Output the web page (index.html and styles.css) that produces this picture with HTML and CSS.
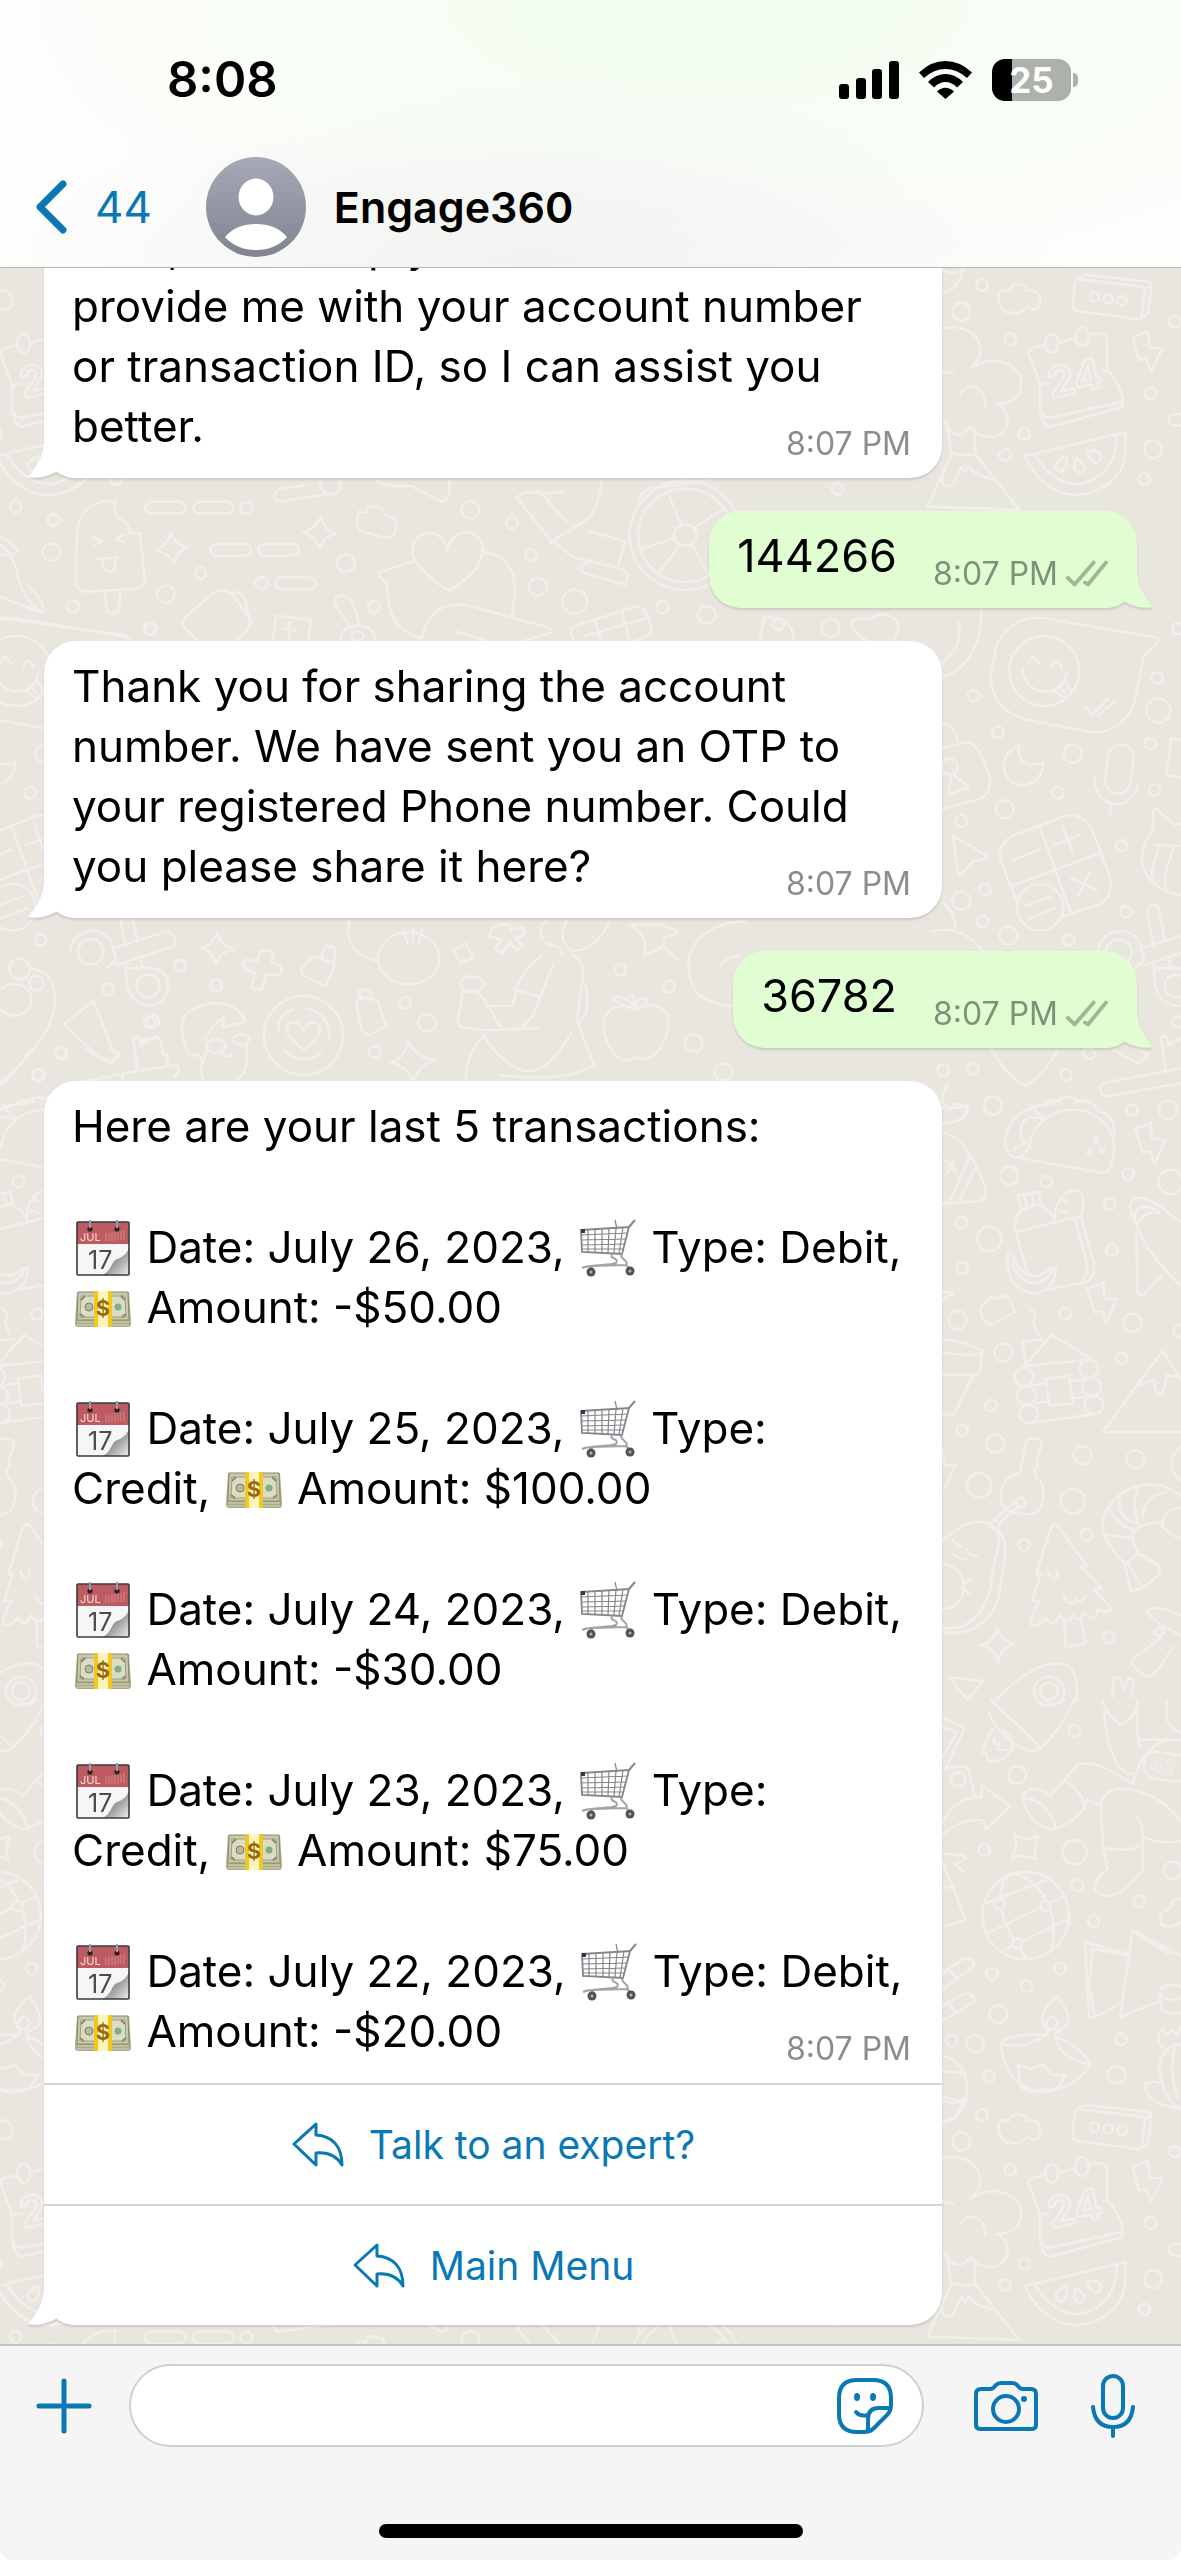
FILE: index.html
```
<!DOCTYPE html>
<html lang="en">
<head>
    <meta charset="UTF-8">
    <meta name="viewport" content="width=device-width, initial-scale=1.0">
    <title>Engage360</title>
    <link rel="stylesheet" href="styles.css">
</head>
<body>
    <!-- SHARED SHAPES -->
    <svg class="sprite" aria-hidden="true">
        <defs>
            <linearGradient id="avatarFill" x1="0" y1="0" x2="0" y2="1">
                <stop offset="0" stop-color="#a6aab8"/>
                <stop offset="1" stop-color="#80848f"/>
            </linearGradient>
            <linearGradient id="pageCurl" x1="0" y1="0" x2="1" y2="1">
                <stop offset="0" stop-color="#fff"/>
                <stop offset="0.5" stop-color="#999"/>
                <stop offset="1" stop-color="#eee"/>
            </linearGradient>
        </defs>
        <symbol id="tail" viewBox="0 0 48 40">
            <path d="M16 0C16 16 10 28 0 39C10 41 22 38 29 33C34 38 42 40 48 40V0Z"/>
        </symbol>
        <symbol id="ticks" viewBox="0 0 44 28">
            <path d="M2 18L9 25L29 2M20 23L23 25L42 2"/>
        </symbol>
        <symbol id="reply" viewBox="0 0 54 46">
            <path d="M25 2L3 22L25 43V31C36 30 45 33 51 43C51 25 42 14 25 13Z"/>
        </symbol>
        <symbol id="calendar" viewBox="0 0 56 58">
            <rect x="2" y="3" width="52" height="53" rx="1" fill="#f6f6f6"/>
            <path d="M2 3H54V25H2Z" fill="#bd5b60"/>
            <text x="5" y="22" font-family="Inter, sans-serif" font-size="11" fill="#f3d9da">JUL</text>
            <path d="M31 14V22M34 14V22M37 13V22M40 13V22M43 12V21M46 12V21M49 11V21" stroke="#d08a8d"/>
            <text x="13" y="50" font-family="Inter, sans-serif" font-size="25" fill="#4a4a4a">17</text>
            <path d="M28 56C38 50 36 42 42 40C48 38 52 34 54 29V56Z" fill="url(#pageCurl)"/>
            <rect x="2" y="3" width="52" height="53" rx="1" fill="none" stroke="#3c3a40" stroke-width="1.6"/>
            <circle cx="15" cy="10" r="2.6" fill="#2d2226"/>
            <circle cx="42" cy="10" r="2.6" fill="#2d2226"/>
            <path d="M15 9V1M42 9V1" stroke="#8ea2b4" stroke-width="2"/>
        </symbol>
        <symbol id="cart" viewBox="0 0 56 58">
            <g fill="none" stroke="#85858b" stroke-width="1.2">
                <path d="M1 11L49 8L42 35L2 33Z" stroke-width="1.8"/>
                <path d="M1 16L48 14M1 21L46 20M2 26L45 25M2 30L43 30M8 11V33M15 10V34M22 10V34M29 9L28 34M36 9L34 34M43 8L39 35"/>
                <path d="M49 8L55 1" stroke-width="2"/>
                <path d="M35 1L37 10"/>
                <path d="M32 35C29 40 40 39 36 44C30 47 12 45 2 49M42 35C38 39 50 42 46 46L12 47M2 49C8 46 12 47 12 50M46 46L50 50" stroke="#a2a2a8" stroke-width="2"/>
            </g>
            <rect x="1" y="10" width="4" height="4" fill="#2b3a4d"/>
            <circle cx="11" cy="53" r="4.5" fill="#574f51"/>
            <circle cx="50" cy="52" r="4.5" fill="#574f51"/>
            <circle cx="11" cy="53" r="1.5" fill="#b9b2b4"/>
            <circle cx="50" cy="52" r="1.5" fill="#b9b2b4"/>
        </symbol>
        <symbol id="money" viewBox="0 0 56 58">
            <path d="M2 13H54L56 44Q56 48 53 48H3Q0 48 0 44Z" fill="#a9a887"/>
            <path d="M2 43H54M2 46H54" stroke="#d9d8bd"/>
            <path d="M3 13H53L54 41H2Z" fill="#c9c9ab" stroke="#8b8b6c"/>
            <path d="M6 17H50L51 38H5Z" fill="#dcdcc4" stroke="#a0a083"/>
            <circle cx="14" cy="28" r="4" fill="#b9b99c" stroke="#7e7e62"/>
            <circle cx="43" cy="28" r="3.5" fill="#7fae84"/>
            <path d="M6 21L10 17M50 21L46 17M5 35L9 38M51 35L47 38" stroke="#8b8b6c" stroke-width="2"/>
            <path d="M19 12H37V48H19Z" fill="#f2c81e"/>
            <path d="M23 12H33V48H23Z" fill="#fdf3bd"/>
            <text x="28" y="37" text-anchor="middle" font-family="Inter, sans-serif" font-weight="700" font-size="22" fill="#9a6a10">$</text>
        </symbol>
    </svg>

    <!-- HEADER -->
    <header class="header">
        <div class="status-bar">
            <span class="clock">8:08</span>
            <div class="status-icons">
                <svg class="signal" viewBox="0 0 60 38" aria-hidden="true">
                    <rect x="0" y="23" width="10" height="15" rx="3"/>
                    <rect x="17" y="17" width="10" height="21" rx="3"/>
                    <rect x="33" y="8" width="10" height="30" rx="3"/>
                    <rect x="50" y="0" width="10" height="38" rx="3"/>
                </svg>
                <svg class="wifi" viewBox="0 0 53 38" aria-hidden="true">
                    <path d="M0 11.500Q12 0 26.500 0T53 11.500L48 17Q38 8 26.500 8T5 17Z"/>
                    <path d="M9 21Q17 13 26.500 13T44 21L38 26.500Q33 21 26.500 21T15 26.500Z"/>
                    <path d="M18 30.500Q26.500 23 35 30.500L26.500 38Z"/>
                </svg>
                <div class="battery">25</div>
            </div>
        </div>
        <div class="nav">
            <a class="back" href="#" aria-label="Back, 44 unread">
                <svg class="chevron" viewBox="0 0 32 54" aria-hidden="true"><path d="M27 4L4 27L27 50"/></svg>
                <span>44</span>
            </a>
            <svg class="avatar" viewBox="0 0 100 100" aria-hidden="true">
                <circle cx="50" cy="50" r="50" fill="url(#avatarFill)"/>
                <ellipse cx="50" cy="40" rx="17.500" ry="18.500" fill="#fff"/>
                <path d="M19 80Q30 67 50 67T81 80Q69 93 50 93T19 80Z" fill="#fff"/>
            </svg>
            <h1 class="name">Engage360</h1>
        </div>
    </header>

    <!-- CHAT -->
    <main class="chat">
        <svg class="wallpaper" aria-hidden="true">
            <defs>
                <g id="doodles">
                    <!-- cloud, box, calendar, bolt, melon, volcano -->
                    <g transform="translate(581 0) scale(.3827 .3333)">
                        <path d="M1100 925C1080 890 1095 860 1118 873C1125 845 1160 845 1165 872C1190 865 1205 890 1198 915C1190 935 1175 930 1165 920C1155 940 1130 945 1120 935C1110 940 1102 935 1100 925Z"/>
                        <path d="M1290 850Q1292 838 1305 838L1465 860Q1475 862 1473 875L1465 945Q1463 962 1450 957L1295 932Q1283 928 1285 915ZM1298 840L1320 825L1480 845Q1492 848 1490 862L1482 935Q1475 955 1455 957M1473 868L1490 855"/>
                        <path d="M1212 1036L1180 1045Q1168 1050 1170 1062L1200 1155L1200 1230Q1203 1275 1225 1280L1405 1225Q1418 1220 1416 1200Q1410 1150 1375 1110L1375 1020Q1372 1000 1355 1000L1328 1003M1248 1028L1290 1015M1200 1155L1225 1150M1365 1115L1375 1110M1205 1240Q1215 1258 1228 1253L1414 1205"/>
                        <path d="M1442 1012L1480 995L1487 1045L1520 1045L1490 1115L1475 1075L1458 1082Z"/>
                        <path d="M1160 1368L1422 1297Q1430 1400 1390 1440Q1330 1500 1260 1480Q1190 1450 1160 1368ZM1185 1362Q1230 1450 1300 1453Q1400 1430 1400 1303"/>
                        <path d="M945 985C1010 970 1050 1010 1042 1070Q1030 1090 1020 1105C1070 1060 1150 1090 1150 1150C1150 1200 1120 1210 1085 1212C1130 1230 1125 1310 1070 1310C1030 1310 1025 1290 1018 1280C1000 1310 970 1320 950 1265M990 1185C1010 1140 1060 1160 1056 1220M945 1115L973 1120"/>
                        <path d="M955 1270L968 1360Q1000 1370 1030 1362V1290M968 1362L905 1520L1145 1530L1030 1362M960 1385C930 1440 945 1470 970 1455C985 1430 990 1400 996 1400Q1000 1420 1005 1415Q1018 1390 1020 1410Q1040 1430 1075 1438M945 810Q985 830 1000 805M945 880Q985 870 1000 808"/>
                        <ellipse cx="1230" cy="1030" rx="17" ry="28"/><ellipse cx="1309" cy="1010" rx="17" ry="28"/>
                        <ellipse cx="1342" cy="891" rx="12" ry="14"/><ellipse cx="1378" cy="896" rx="12" ry="14"/><ellipse cx="1414" cy="902" rx="12" ry="14"/>
                        <path d="M1268 1368Q1275 1400 1255 1415Q1238 1410 1240 1395Q1250 1375 1268 1368ZM1295 1375Q1320 1395 1315 1412Q1302 1425 1290 1410Q1285 1395 1295 1375ZM1322 1355Q1350 1345 1360 1368Q1358 1385 1345 1388Q1325 1378 1322 1355Z"/>
                        <ellipse cx="1048" cy="855" rx="15" ry="17"/><ellipse cx="994" cy="935" rx="23" ry="27"/><ellipse cx="1122" cy="1018" rx="15" ry="17"/>
                        <ellipse cx="1488" cy="1180" rx="15" ry="17"/><ellipse cx="1158" cy="1302" rx="15" ry="17"/><ellipse cx="1108" cy="1365" rx="15" ry="17"/>
                        <ellipse cx="1495" cy="1348" rx="23" ry="27"/><ellipse cx="1472" cy="1438" rx="15" ry="17"/><ellipse cx="1552" cy="965" rx="15" ry="17"/>
                        <rect x="1536" y="1243" width="60" height="34" rx="15"/><ellipse cx="670" cy="1467" rx="15" ry="17"/>
                        <path d="M150 1500Q160 1460 220 1460L340 1440"/>
                    </g>
                    <text class="doodle-text" x="1075" y="393" font-size="42" transform="rotate(-12 1075 380)">24</text>

                    <!-- popsicle, pills, heart, wheel and the row below it -->
                    <g transform="translate(0 470) scale(.4719 .3954)">
                        <path d="M245 78C190 75 165 110 163 160L160 285Q165 308 185 308L285 300Q308 295 307 275L296 160L275 158Q270 130 262 128Q235 120 245 78ZM223 310L226 355Q240 375 252 355L255 305M198 170L215 180L200 190M262 165L246 175L264 184M208 225L250 222M215 225L220 250Q232 265 244 250L245 223"/>
                        <rect x="308" y="80" width="85" height="30" rx="15"/><rect x="410" y="80" width="85" height="30" rx="15"/>
                        <rect x="446" y="187" width="86" height="30" rx="15"/><rect x="547" y="187" width="86" height="30" rx="15"/><rect x="583" y="272" width="86" height="30" rx="15"/>
                        <path d="M362 157Q370 190 398 195Q375 200 370 238Q358 210 330 203Q355 190 362 157ZM680 118Q685 150 712 162Q685 168 677 200Q668 165 642 158Q670 150 680 118Z"/>
                        <path d="M760 105L775 108L782 92L812 98L815 112L840 125Q842 170 818 172L765 155Q752 145 760 105Z"/>
                        <path d="M952 305C900 270 860 220 878 180C900 145 940 155 948 205C955 155 1000 140 1020 180C1035 240 980 285 952 305ZM877 230L805 258Q795 262 820 285C820 350 830 400 890 425M1026 207C1100 220 1095 300 1085 370"/>
                        <path d="M893 430C910 330 970 335 1000 345L1160 398Q1175 405 1165 412L1110 432M965 408L1030 432"/>
                        <path d="M395 370L450 312Q475 295 495 318L525 370Q535 390 520 410L500 434M395 370Q380 385 395 405L420 434M490 310Q520 305 522 345L533 390"/>
                        <path d="M578 434L585 368L660 380L652 434M612 385V425M600 400L628 408M745 400L710 340Q708 315 725 318Q745 320 752 350L762 395"/>
                        <ellipse cx="758" cy="424" rx="36" ry="30"/><ellipse cx="758" cy="420" rx="12" ry="12"/>
                        <path d="M1210 412Q1205 400 1225 392L1345 346Q1362 345 1368 360L1382 400Q1382 420 1340 434M1210 412L1216 434M1260 380L1275 434M1318 357L1335 434M1240 420L1370 375"/>
                        <ellipse cx="1452" cy="165" rx="118" ry="138"/><ellipse cx="1452" cy="165" rx="100" ry="118"/><ellipse cx="1452" cy="165" rx="24" ry="27"/>
                        <path d="M1444 140L1418 65M1470 148L1530 100M1430 172L1360 200M1440 190L1400 255M1465 188L1500 260"/>
                        <path d="M1095 70Q1110 50 1150 60L1195 55M1095 70L1165 175L1215 220L1300 245Q1340 250 1325 290L1235 260Q1225 240 1245 232M1140 50L1200 130M1165 185L1250 120Q1268 90 1275 28M1250 155L1325 180L1310 240M645 38L595 48Q570 65 590 80L700 60M720 28Q725 60 700 62Q675 55 680 28M800 28Q820 45 870 40L935 80Q955 80 952 28"/>
                        <path d="M0 170Q30 185 38 205M0 215L30 212M35 250Q45 330 90 360Q95 340 80 320L58 292M35 250Q20 200 0 190M0 320Q50 345 88 360M0 375L265 418L275 434"/>
                        <path d="M855 1168L865 1198M875 1160V1195M895 1160L887 1195M740 1140C730 1190 750 1230 800 1242M962 1215L988 1197L1002 1235L975 1245Z"/>
                        <ellipse cx="866" cy="1235" rx="65" ry="66"/>
                        <path d="M460 1170Q468 1205 496 1212Q465 1220 458 1250Q450 1215 428 1210Q450 1200 460 1170ZM865 1445Q880 1485 922 1492Q885 1505 875 1548Q865 1510 828 1498Q860 1485 865 1445Z"/>
                        <path d="M1060 1150L1080 1150L1083 1165L1108 1155L1112 1175L1092 1185L1110 1205L1095 1215L1080 1195L1065 1222L1050 1210L1062 1188L1038 1180L1042 1160Z"/>
                        <path d="M550 1220Q565 1210 580 1222L575 1245L595 1255Q600 1270 588 1278L565 1275L555 1312Q540 1320 533 1308L540 1272L518 1260Q512 1245 522 1238L545 1243Z"/>
                        <path d="M665 1228L710 1250L690 1305L645 1280Q635 1270 640 1260ZM680 1235L690 1205Q705 1200 712 1215L705 1248M755 1350Q750 1340 775 1335L800 1342L818 1405L785 1428Q770 1430 765 1410ZM765 1338L760 1318Q768 1308 785 1320L792 1340"/>
                        <path d="M135 1402L198 1342L240 1470L252 1475L235 1500L222 1488L210 1485ZM283 1440Q300 1430 300 1445Q330 1430 340 1440L345 1475L355 1480V1510M283 1440L290 1520M260 1545L262 1525L375 1505Q385 1515 370 1535"/>
                        <path d="M430 1545Q420 1500 440 1470M400 1480Q370 1400 400 1370C450 1330 510 1350 520 1395L470 1410L475 1385Q450 1400 435 1440M408 1480Q425 1475 430 1500M470 1475Q480 1488 492 1478M522 1455Q530 1520 500 1545"/>
                        <ellipse cx="458" cy="1457" rx="20" ry="17"/><ellipse cx="511" cy="1440" rx="17" ry="13"/>
                        <ellipse cx="643" cy="1430" rx="84" ry="100"/>
                        <path d="M643 1465C610 1440 600 1410 615 1398Q635 1390 643 1420Q650 1390 672 1400C690 1420 665 1450 643 1465ZM590 1420C585 1380 610 1370 620 1365M650 1362Q700 1375 698 1440M602 1468Q640 1510 680 1475"/>
                        <ellipse cx="30" cy="1340" rx="37" ry="40"/><ellipse cx="42" cy="1262" rx="22" ry="26"/><ellipse cx="77" cy="1298" rx="15" ry="19"/>
                        <path d="M70 1262C130 1270 130 1380 80 1450C50 1500 20 1530 0 1548"/>
                        <path d="M1148 1185Q1140 1150 1160 1140M1155 1195L1185 1208L1190 1225M1200 1140Q1180 1190 1210 1215Q1260 1220 1290 1145M1210 1225Q1240 1240 1235 1290L1222 1390M1148 1228Q1110 1260 1092 1315L1145 1332M1172 1250L1145 1332Q1130 1400 1090 1418M1030 1355H1085L1095 1320M980 1320Q1000 1310 1020 1330L1065 1415Q1030 1420 975 1408Q965 1390 975 1365ZM1240 1300Q1250 1350 1240 1380L1225 1400M1025 1430Q1060 1500 1110 1520Q1160 1530 1210 1425M1065 1415L1140 1412M1222 1390L1258 1505Q1200 1550 1060 1530M1025 1430Q985 1480 988 1545"/>
                        <ellipse cx="1000" cy="1300" rx="24" ry="20"/>
                        <path d="M1335 1150H1400L1435 1165Q1430 1180 1410 1180L1405 1205Q1400 1215 1365 1225Q1375 1180 1335 1150ZM1405 1205L1438 1240"/>
                        <path d="M1348 1365C1300 1340 1270 1370 1282 1430C1300 1500 1330 1500 1345 1485C1370 1500 1400 1480 1415 1420C1425 1360 1390 1340 1348 1365ZM1348 1365L1340 1325M1345 1360Q1300 1350 1298 1332Q1330 1330 1345 1360M1345 1360Q1350 1330 1373 1338Q1370 1355 1345 1360M1580 1140C1470 1150 1440 1230 1470 1310Q1490 1350 1550 1355M1525 1260Q1535 1230 1568 1230"/>
                        <ellipse cx="33" cy="93" rx="12" ry="15"/><ellipse cx="113" cy="126" rx="12" ry="15"/><ellipse cx="154" cy="345" rx="12" ry="15"/><ellipse cx="320" cy="402" rx="12" ry="15"/>
                        <ellipse cx="425" cy="261" rx="12" ry="15"/><ellipse cx="522" cy="96" rx="13" ry="15"/><ellipse cx="554" cy="286" rx="13" ry="15"/><ellipse cx="792" cy="346" rx="12" ry="15"/>
                        <ellipse cx="1085" cy="134" rx="12" ry="15"/><ellipse cx="1125" cy="215" rx="12" ry="15"/><ellipse cx="1404" cy="348" rx="12" ry="15"/><ellipse cx="382" cy="1254" rx="12" ry="15"/>
                        <ellipse cx="229" cy="1314" rx="12" ry="15"/><ellipse cx="458" cy="1303" rx="12" ry="15"/><ellipse cx="325" cy="1394" rx="12" ry="15"/><ellipse cx="130" cy="1474" rx="12" ry="15"/>
                        <ellipse cx="82" cy="1530" rx="12" ry="15"/><ellipse cx="858" cy="1348" rx="12" ry="15"/><ellipse cx="794" cy="1472" rx="12" ry="15"/><ellipse cx="1315" cy="1264" rx="12" ry="15"/><ellipse cx="1418" cy="1307" rx="12" ry="15"/>
                        <ellipse cx="109" cy="208" rx="19" ry="22"/><ellipse cx="351" cy="314" rx="19" ry="22"/><ellipse cx="733" cy="236" rx="19" ry="22"/><ellipse cx="997" cy="101" rx="19" ry="22"/>
                        <ellipse cx="1140" cy="295" rx="19" ry="22"/><ellipse cx="1497" cy="366" rx="19" ry="22"/><ellipse cx="905" cy="1398" rx="19" ry="22"/><ellipse cx="1470" cy="1450" rx="19" ry="22"/><ellipse cx="1532" cy="1522" rx="19" ry="22"/>
                        <ellipse cx="1218" cy="333" rx="26" ry="30"/><ellipse cx="1760" cy="400" rx="19" ry="22"/><ellipse cx="1650" cy="390" rx="12" ry="15"/>
                        <path d="M1840 434C1790 400 1800 360 1840 380Q1870 350 1900 380Q1910 400 1890 434M1610 434L1620 370Q1690 380 1680 434"/>
                    </g>

                    <!-- speech bubble, lock, moon, mic, calculator, scissors -->
                    <g transform="translate(931 590) scale(.3333)">
                        <path d="M190 200C200 120 270 75 340 85L665 140Q690 145 675 162L638 200L612 330C590 400 540 430 480 426L290 390C210 370 175 310 180 250ZM293 218Q305 185 325 222M362 230Q378 195 393 234M275 232C275 320 390 330 406 252M370 302L395 322Q415 325 422 300L400 272M385 290L400 308M463 348L485 374L530 327M500 376L555 333"/>
                        <circle cx="340" cy="243" r="105"/>
                        <path d="M150 60C155 160 110 240 33 262M84 98C95 160 60 200 33 218M33 475L90 458Q130 450 150 495L175 555Q185 610 145 628L33 658M33 400Q65 400 80 452M66 552L113 592L53 613L60 552"/>
                        <circle cx="56" cy="530" r="24"/>
                        <path d="M265 465Q255 540 338 518C330 600 240 605 220 545Q210 490 265 465Z"/>
                        <rect x="527" y="463" width="76" height="148" rx="38" transform="rotate(8 565 537)"/>
                        <path d="M490 562C490 660 600 670 622 585M544 642L536 672"/>
                        <path d="M325 708L400 678Q460 665 490 735L532 850Q555 920 500 945L390 982M325 708L250 735Q195 765 208 810L260 940M325 708L420 970M240 888L508 790M245 810L325 780M370 765L447 735M396 710L424 785M420 865L497 900M478 845L440 920M282 948L360 920M295 985L373 955"/>
                        <circle cx="327" cy="952" r="70"/>
                        <path d="M68 738L170 800Q172 808 125 815L90 855Q84 860 82 850L66 745ZM664 725L668 660Q675 652 685 665L732 705L780 690M664 725C610 790 620 890 750 915M672 765L780 768M680 765C690 800 655 810 665 870M728 768C725 810 695 820 705 900M705 555L722 445L780 455M705 555L780 565"/>
                        <path d="M648 960Q665 930 682 955L703 1052M648 960L668 1070M500 1085C510 1020 590 1000 625 1055L640 1110L610 1135M630 1075L790 1025Q830 1035 810 1070L640 1125M670 1125C665 1200 680 1240 740 1248Q800 1240 795 1170Q780 1130 720 1135L712 1100M670 1135L720 1135"/>
                        <circle cx="563" cy="1086" r="38"/><circle cx="735" cy="1188" r="34"/>
                        <path d="M33 935Q70 960 75 1015M0 1025Q90 1000 155 1085M180 1375Q220 1450 285 1490Q350 1440 380 1380M515 1480Q500 1500 520 1520L760 1478M515 1480L750 1435M705 1440L690 1345Q705 1325 715 1365L760 1340M550 1380L620 1420L650 1395L620 1375M50 1485Q15 1540 60 1555L110 1550M290 1560Q340 1540 370 1540Q400 1510 440 1530Q490 1530 495 1560"/>
                        <circle cx="127" cy="317" r="17"/><circle cx="201" cy="427" r="17"/><circle cx="678" cy="264" r="17"/><circle cx="658" cy="461" r="17"/><circle cx="671" cy="600" r="17"/>
                        <circle cx="381" cy="608" r="17"/><circle cx="91" cy="693" r="17"/><circle cx="571" cy="767" r="17"/><circle cx="161" cy="899" r="17"/><circle cx="155" cy="995" r="17"/>
                        <circle cx="584" cy="965" r="17"/><circle cx="413" cy="1050" r="17"/><circle cx="37" cy="1440" r="17"/><circle cx="126" cy="1436" r="17"/><circle cx="405" cy="1455" r="17"/>
                        <circle cx="474" cy="1390" r="17"/><circle cx="740" cy="116" r="17"/><circle cx="740" cy="1296" r="17"/><circle cx="425" cy="491" r="27"/><circle cx="221" cy="658" r="27"/>
                        <circle cx="91" cy="932" r="27"/><circle cx="232" cy="1037" r="27"/><circle cx="186" cy="1546" r="27"/><circle cx="682" cy="362" r="36"/>
                    </g>

                    <!-- taco, lunch bag, cabin, key, tree, shrimp -->
                    <g transform="translate(931 1100) scale(.3333 .3827)">
                        <path d="M245 148Q225 140 222 110C230 40 290 20 340 10Q350 -5 390 5M245 148L510 190Q540 190 543 160C570 80 500 25 420 25C340 30 300 80 298 115Q285 145 260 150M250 130Q270 110 298 115M335 50Q270 30 268 90Q275 110 285 112M300 12Q320 40 340 45M430 8Q480 -10 500 28Q560 40 548 100M33 18Q60 40 70 10L112 15Q105 60 33 62"/>
                        <circle cx="495" cy="104" r="6"/><circle cx="476" cy="137" r="6"/><circle cx="513" cy="131" r="6"/>
                        <path d="M33 85C100 95 140 170 165 235Q170 260 140 265L33 270M115 148L58 262M133 178L85 265M40 155L75 185M70 155L50 190"/>
                        <path d="M612 75L660 60L662 100L703 105L670 168L658 135L637 138ZM468 492L518 478L520 520L557 520L525 584L512 552L490 555Z"/>
                        <path d="M255 345L450 303L490 430Q490 480 440 480L350 495M255 345L290 455M432 310L468 430Q470 460 455 470M255 345Q245 300 280 285L320 272Q360 285 372 315M260 250L322 240L330 270L270 283ZM280 247L288 279M302 243L310 275M372 310C370 240 440 220 455 250Q460 280 450 303M385 290L407 295M390 258L408 266"/>
                        <path d="M230 402H245Q260 460 320 460Q350 450 360 440L375 440Q370 500 310 505C240 500 225 450 230 402ZM243 425Q270 490 330 475Q360 460 362 445M150 540L180 515L195 520L225 510L240 525L250 555L180 588Q145 575 150 540ZM297 545Q320 560 308 575Q305 590 322 612"/>
                        <path d="M280 695L363 614L485 678ZM283 690L275 630L335 625M307 745L345 740M420 735L455 730M315 792L350 788M425 780L460 776M293 844L490 821M345 728L415 720L425 793L355 798Z"/>
                        <ellipse cx="279" cy="724" rx="28" ry="24"/><ellipse cx="287" cy="772" rx="28" ry="24"/><ellipse cx="293" cy="820" rx="28" ry="24"/><ellipse cx="474" cy="702" rx="28" ry="24"/><ellipse cx="482" cy="749" rx="28" ry="24"/><ellipse cx="488" cy="797" rx="28" ry="24"/>
                        <path d="M850 868L695 655L515 868ZM622 748L668 730Q675 770 685 770Q700 770 708 718L750 725M33 625Q100 630 155 655L145 710Q140 720 120 720L33 717M33 660Q120 672 152 660M125 722L70 820L33 823M33 500L68 505L33 522M33 910L40 955L73 953L40 1015"/>
                        <path d="M600 290Q590 260 625 255Q660 255 720 300L800 350M600 290Q640 400 750 485M617 330Q630 290 685 295Q650 270 620 285Q605 300 617 330M617 350L618 500Q630 515 640 508L692 458"/>
                        <path d="M265 978L287 890Q300 880 330 890Q335 900 325 920L318 940Q325 960 310 965L315 985M265 978C215 975 200 1040 215 1060C240 1085 310 1090 325 1070Q355 1010 315 985M262 1062L205 1105M255 1050L190 1095"/>
                        <ellipse cx="269" cy="1052" rx="15" ry="13"/><ellipse cx="190" cy="1110" rx="17" ry="10"/>
                        <path d="M33 1150L90 1115C150 1090 200 1100 205 1150C200 1200 180 1220 180 1270C160 1350 100 1390 33 1378M200 1120Q230 1150 220 1200L205 1290C180 1380 100 1400 33 1390M33 1210Q95 1220 98 1270Q95 1330 33 1330M65 1148Q75 1170 95 1165M68 1185Q80 1200 105 1198M108 1175Q115 1192 138 1190M98 1265L118 1252M95 1275L115 1290"/>
                        <path d="M360 1118Q372 1100 385 1118L468 1218L450 1220L510 1275L490 1280L542 1330Q535 1345 500 1330Q500 1355 480 1355Q460 1340 458 1340Q440 1370 425 1345Q410 1380 385 1345Q370 1385 345 1352Q330 1375 300 1372Q295 1360 325 1308L303 1310L330 1238L315 1240ZM400 1365L403 1430L465 1420L448 1355M352 1232Q362 1260 380 1245L378 1230M398 1295Q415 1330 435 1305Q450 1320 463 1295"/>
                        <path d="M750 1035Q700 1000 650 1005C560 1010 500 1080 518 1130Q540 1180 580 1210L600 1283L635 1275L685 1240V1215L622 1185Q605 1160 605 1135Q620 1105 690 1105M565 1035Q560 1100 620 1105M625 1010Q600 1050 620 1100M710 1025Q640 1030 635 1090M750 1065Q690 1070 695 1115Q720 1140 750 1145M535 1070Q560 1110 610 1125M520 1135L605 1145M580 1208Q600 1205 620 1185L685 1220M590 1210L635 1275"/>
                        <path d="M198 1380Q210 1415 250 1420Q210 1430 202 1468Q190 1430 148 1425Q190 1415 198 1380ZM648 1335Q680 1320 720 1335L780 1360M648 1335Q660 1360 750 1400M690 1405L605 1460Q595 1480 650 1508Q670 1510 725 1430M668 1390Q690 1370 700 1390Q680 1410 668 1390M55 1508L155 1518L110 1568ZM195 1568C250 1520 300 1480 370 1472C430 1470 440 1500 438 1568M545 1560Q540 1500 565 1510L578 1540Q590 1500 608 1515L600 1560"/>
                        <ellipse cx="354" cy="1545" rx="45" ry="38"/><ellipse cx="354" cy="1545" rx="27" ry="22"/>
                        <ellipse cx="603" cy="27" rx="17" ry="15"/><ellipse cx="592" cy="193" rx="17" ry="15"/><ellipse cx="346" cy="213" rx="17" ry="15"/><ellipse cx="536" cy="271" rx="17" ry="15"/><ellipse cx="92" cy="321" rx="17" ry="15"/>
                        <ellipse cx="94" cy="439" rx="17" ry="15"/><ellipse cx="542" cy="393" rx="17" ry="15"/><ellipse cx="402" cy="559" rx="17" ry="15"/><ellipse cx="573" cy="675" rx="17" ry="15"/><ellipse cx="180" cy="798" rx="17" ry="15"/>
                        <ellipse cx="94" cy="864" rx="17" ry="15"/><ellipse cx="466" cy="1137" rx="17" ry="15"/><ellipse cx="279" cy="1162" rx="17" ry="15"/><ellipse cx="533" cy="1405" rx="17" ry="15"/><ellipse cx="745" cy="604" rx="17" ry="15"/>
                        <ellipse cx="186" cy="15" rx="27" ry="24"/><ellipse cx="711" cy="25" rx="27" ry="24"/><ellipse cx="235" cy="198" rx="27" ry="24"/><ellipse cx="80" cy="575" rx="27" ry="24"/><ellipse cx="217" cy="660" rx="27" ry="24"/>
                        <ellipse cx="605" cy="582" rx="27" ry="24"/><ellipse cx="193" cy="898" rx="27" ry="24"/><ellipse cx="454" cy="928" rx="27" ry="24"/><ellipse cx="613" cy="939" rx="27" ry="24"/>
                        <ellipse cx="719" cy="214" rx="36" ry="32"/><ellipse cx="175" cy="363" rx="36" ry="32"/><ellipse cx="145" cy="1007" rx="36" ry="32"/><ellipse cx="425" cy="1048" rx="36" ry="32"/><ellipse cx="770" cy="950" rx="48" ry="48"/>
                    </g>

                    <!-- rocket, arrow, globe, runner, cards, lamp -->
                    <g transform="translate(931 1700) scale(.3333 .4145)">
                        <path d="M175 30Q180 60 250 105Q300 135 330 115C390 70 410 30 430 0M180 0L330 115M345 0Q370 20 400 0M185 70Q155 110 155 130Q170 125 170 148Q230 150 245 110Q235 70 200 72M190 90Q180 110 205 105Q190 125 225 120"/>
                        <path d="M33 300C60 250 100 235 150 235L152 205L238 256L165 312L155 290Q90 285 33 325M33 165L90 160Q110 160 115 175L130 230M33 40L100 68L45 165M33 65L78 78L33 140M248 322Q282 345 322 328Q305 355 316 385Q280 370 242 382Q265 350 248 322Z"/>
                        <ellipse cx="284" cy="520" rx="130" ry="105"/>
                        <path d="M165 490L345 435M170 562L395 475M210 607L408 530M245 418C195 430 195 520 258 588L285 622M245 418C330 430 390 520 360 605"/>
                        <g fill="#e9e5df"><ellipse cx="205" cy="492" rx="15" ry="12"/><ellipse cx="344" cy="497" rx="15" ry="12"/><ellipse cx="259" cy="587" rx="15" ry="12"/></g>
                        <path d="M275 235C290 200 340 215 358 232L440 155C500 145 560 180 600 202M275 235Q290 300 365 312Q450 290 470 240L505 255M275 235Q350 240 375 310M400 195Q450 215 460 255M520 30Q530 150 590 178L605 178M620 30Q615 70 625 112M605 200Q640 100 720 97M620 95L750 97M510 250Q520 210 590 215Q680 225 750 290M510 250L515 350L530 408Q490 430 492 460Q550 500 635 410L635 330Q635 290 615 278M515 355Q580 370 635 350M635 330Q690 350 750 340M515 0Q520 30 570 60Q620 40 620 0M710 0Q690 70 760 80"/>
                        <rect x="640" y="128" width="130" height="65" rx="30" transform="rotate(6 700 160)"/>
                        <path d="M33 370L100 375Q115 385 70 395L100 415M33 390L65 450L103 530L45 545M33 455L65 450M462 585L590 612M462 585L475 765Q480 775 570 730M485 600L475 690L492 765M485 600L590 616M605 555L568 765L690 725M605 555L790 635M620 565L710 610"/>
                        <ellipse cx="725" cy="705" rx="38" ry="18"/>
                        <path d="M687 705L692 745Q720 765 770 750M685 800L700 795L705 810L725 795L735 808L750 790M685 800Q675 830 700 840M760 830Q690 830 685 890Q700 970 750 985M735 835Q710 880 740 960M640 930Q660 915 690 925M640 930Q650 980 750 985M750 480Q720 480 715 505Q680 510 690 540Q720 555 750 535"/>
                        <path d="M33 660L95 625Q125 620 130 640L33 700M60 655L80 675M33 740L100 708Q130 708 130 728L33 775M60 738L75 755M33 858Q105 870 108 940Q105 1010 33 1018M33 895L95 900M33 955L95 970"/>
                        <path d="M210 830Q220 805 340 808Q360 800 345 790Q310 760 380 715Q430 770 400 790Q370 800 372 812Q440 830 478 878Q430 950 300 940Q215 910 210 830ZM215 832Q300 840 350 805M372 812Q390 870 478 878M260 880L300 890L335 880L365 905L405 905L375 940Q320 955 270 935Z"/>
                        <ellipse cx="362" cy="780" rx="17" ry="15"/>
                        <ellipse cx="430" cy="75" rx="17" ry="14"/><ellipse cx="160" cy="362" rx="17" ry="14"/><ellipse cx="439" cy="447" rx="17" ry="14"/><ellipse cx="487" cy="534" rx="17" ry="14"/><ellipse cx="625" cy="486" rx="17" ry="14"/>
                        <ellipse cx="386" cy="648" rx="17" ry="14"/><ellipse cx="183" cy="660" rx="17" ry="14"/><ellipse cx="287" cy="690" rx="17" ry="14"/><ellipse cx="62" cy="821" rx="17" ry="14"/><ellipse cx="570" cy="819" rx="17" ry="14"/><ellipse cx="174" cy="908" rx="17" ry="14"/>
                        <ellipse cx="259" cy="181" rx="27" ry="21"/><ellipse cx="81" cy="191" rx="22" ry="17"/><ellipse cx="202" cy="758" rx="27" ry="21"/><ellipse cx="725" cy="411" rx="27" ry="21"/><ellipse cx="557" cy="904" rx="27" ry="21"/><ellipse cx="132" cy="829" rx="27" ry="21"/>
                        <ellipse cx="431" cy="367" rx="36" ry="29"/>
                    </g>
                    <text class="doodle-text thin" x="1163" y="1773" font-size="20" transform="rotate(12 1163 1766)">42</text>
                </g>
            </defs>
            <g transform="translate(0 -268)">
                <use href="#doodles"/>
                <use href="#doodles" x="-1028"/>
                <use href="#doodles" y="1830"/>
                <use href="#doodles" x="-1028" y="1830"/>
            </g>
        </svg>

        <div class="bubble in">
            <svg class="tail" aria-hidden="true"><use href="#tail"/></svg>
            <p class="text">Sure, I can help you with it. Please<br>provide me with your account number<br>or transaction ID, so I can assist you<br>better.<span class="meta"><time>8:07 PM</time></span></p>
        </div>

        <div class="bubble out">
            <svg class="tail" aria-hidden="true"><use href="#tail"/></svg>
            <p class="text">144266<span class="meta"><time>8:07 PM</time><svg class="ticks" aria-hidden="true"><use href="#ticks"/></svg></span></p>
        </div>

        <div class="bubble in">
            <svg class="tail" aria-hidden="true"><use href="#tail"/></svg>
            <p class="text">Thank you for sharing the account number. We have sent you an OTP to your registered Phone number. Could you please share it here?<span class="meta"><time>8:07 PM</time></span></p>
        </div>

        <div class="bubble out">
            <svg class="tail" aria-hidden="true"><use href="#tail"/></svg>
            <p class="text">36782<span class="meta"><time>8:07 PM</time><svg class="ticks" aria-hidden="true"><use href="#ticks"/></svg></span></p>
        </div>

        <div class="bubble in">
            <svg class="tail" aria-hidden="true"><use href="#tail"/></svg>
            <div class="text">
                <p>Here are your last 5 transactions:</p>
                <p><svg class="emoji"><use href="#calendar"/></svg> Date: July 26, 2023, <svg class="emoji"><use href="#cart"/></svg> Type: Debit, <svg class="emoji"><use href="#money"/></svg> Amount: -$50.00</p>
                <p><svg class="emoji"><use href="#calendar"/></svg> Date: July 25, 2023, <svg class="emoji"><use href="#cart"/></svg> Type: Credit, <svg class="emoji"><use href="#money"/></svg> Amount: $100.00</p>
                <p><svg class="emoji"><use href="#calendar"/></svg> Date: July 24, 2023, <svg class="emoji"><use href="#cart"/></svg> Type: Debit, <svg class="emoji"><use href="#money"/></svg> Amount: -$30.00</p>
                <p><svg class="emoji"><use href="#calendar"/></svg> Date: July 23, 2023, <svg class="emoji"><use href="#cart"/></svg> Type: Credit, <svg class="emoji"><use href="#money"/></svg> Amount: $75.00</p>
                <p><svg class="emoji"><use href="#calendar"/></svg> Date: July 22, 2023, <svg class="emoji"><use href="#cart"/></svg> Type: Debit, <svg class="emoji"><use href="#money"/></svg> Amount: -$20.00<span class="meta"><time>8:07 PM</time></span></p>
            </div>
            <button class="quick-reply"><svg class="reply-icon" aria-hidden="true"><use href="#reply"/></svg>Talk to an expert?</button>
            <button class="quick-reply"><svg class="reply-icon" aria-hidden="true"><use href="#reply"/></svg>Main Menu</button>
        </div>
    </main>

    <!-- COMPOSER -->
    <footer class="footer">
        <div class="composer">
            <button class="icon-btn" aria-label="Attach">
                <svg class="line-icon plus" viewBox="0 0 56 56"><path d="M28 3V53M3 28H53"/></svg>
            </button>
            <div class="field">
                <input type="text" aria-label="Message">
                <button class="icon-btn" aria-label="Stickers">
                    <svg class="line-icon sticker" viewBox="0 0 56 56">
                        <path d="M20 2H36Q54 2 54 20V27Q54 33 50 37L37 50Q33 54 27 54H20Q2 54 2 36V20Q2 2 20 2Z"/>
                        <path d="M53 30H42Q31 30 31 41V53M19 34Q23 39 31 37"/>
                        <ellipse class="dot" cx="20" cy="19" rx="3" ry="4"/><ellipse class="dot" cx="36" cy="19" rx="3" ry="4"/>
                    </svg>
                </button>
            </div>
            <button class="icon-btn" aria-label="Camera">
                <svg class="line-icon camera" viewBox="0 0 64 52">
                    <path d="M7 9H16Q19 9 21 6L22 5Q24 3 27 3H38Q41 3 43 5L44 6Q46 9 49 9H57Q62 9 62 14V45Q62 49 57 49H7Q2 49 2 45V14Q2 9 7 9Z"/>
                    <circle cx="32" cy="29" r="13"/><circle class="dot" cx="50" cy="19" r="3"/>
                </svg>
            </button>
            <button class="icon-btn" aria-label="Voice message">
                <svg class="line-icon mic" viewBox="0 0 44 64">
                    <rect x="12" y="2" width="20" height="42" rx="10"/>
                    <path d="M2 33Q4 53 22 53T42 33M22 53V62"/>
                </svg>
            </button>
        </div>
        <div class="home-bar"></div>
    </footer>
</body>
</html>
```
FILE: styles.css
```
* {
    box-sizing: border-box;
}

body {
    font-family: Inter, "Liberation Sans", sans-serif;
    background: #fff;
    color: #000;
    margin: 0;
    height: 100vh;
    display: flex;
    flex-direction: column;
    overflow: hidden;
}

button {
    font-family: inherit;
    background: none;
    border: none;
    padding: 0;
    cursor: pointer;
}

svg {
    display: block;
    flex-shrink: 0;
}

.sprite {
    position: absolute;
    width: 0;
    height: 0;
}

/* Header */
.header {
    display: flex;
    flex-direction: column;
    gap: 47px;
    padding: 50px 110px 10px 36px;
    border-bottom: 1px solid #b4b4b3;
    background:
        radial-gradient(ellipse 45% 70% at 45% 100%, #f2f2f2, transparent),
        radial-gradient(ellipse 60% 110% at 60% 0, #f2fef0, transparent),
        #fdfdfb;
}

.status-bar {
    display: flex;
    justify-content: space-between;
    align-items: center;
    padding-left: 131px;
}

.clock {
    font-size: 49px;
    font-weight: 600;
    line-height: 60px;
}

.status-icons {
    display: flex;
    align-items: center;
    gap: 20px;
}

.signal {
    width: 60px;
    height: 38px;
}

.wifi {
    width: 53px;
    height: 38px;
}

.battery {
    position: relative;
    width: 79px;
    height: 42px;
    border-radius: 13px;
    background: linear-gradient(90deg, #000 25%, #adb1ab 25%);
    color: #fff;
    font-size: 35px;
    font-weight: 700;
    line-height: 42px;
    text-align: center;
}

.battery::after {
    content: "";
    position: absolute;
    left: 81px;
    top: 14px;
    width: 5px;
    height: 14px;
    border-radius: 0 5px 5px 0;
    background: #adb1ab;
}

.nav {
    display: flex;
    align-items: center;
}

.back {
    display: flex;
    align-items: center;
    gap: 27px;
    color: #0a78b4;
    font-size: 44px;
    text-decoration: none;
    margin-right: 54px;
}

.chevron {
    width: 32px;
    height: 54px;
    fill: none;
    stroke: #0a78b4;
    stroke-width: 7;
    stroke-linecap: round;
    stroke-linejoin: round;
}

.avatar {
    width: 100px;
    height: 100px;
    margin-right: 28px;
}

.name {
    font-size: 43px;
    font-weight: 600;
    margin: 0;
}

/* Chat */
.chat {
    position: relative;
    flex: 1;
    min-height: 0;
    display: flex;
    flex-direction: column;
    justify-content: flex-end;
    gap: 33px;
    padding: 0 44px 19px;
    overflow: hidden;
    background: #e9e5df;
}

.wallpaper {
    position: absolute;
    top: 0;
    left: 0;
    width: 100%;
    height: 100%;
    fill: none;
    stroke: #f2efea;
    stroke-width: 2.6;
    stroke-linecap: round;
    stroke-linejoin: round;
}

.wallpaper path,
.wallpaper ellipse,
.wallpaper circle,
.wallpaper rect {
    vector-effect: non-scaling-stroke;
}

.doodle-text {
    font-weight: 700;
    text-anchor: middle;
}

.doodle-text.thin {
    stroke-width: 1;
}

.bubble {
    position: relative;
    flex-shrink: 0;
    border-radius: 32px;
    filter: drop-shadow(0 2px 1px rgba(0, 0, 0, 0.12));
}

.bubble.in {
    align-self: flex-start;
    width: 898px;
    max-width: 100%;
    background: #fff;
    fill: #fff;
}

.bubble.out {
    align-self: flex-end;
    background: #e1fed3;
    fill: #e1fed3;
}

.tail {
    position: absolute;
    bottom: 0;
    left: -16px;
    width: 48px;
    height: 40px;
}

.out .tail {
    left: auto;
    right: -16px;
    transform: scaleX(-1);
}

.text {
    position: relative;
    margin: 0;
    padding: 15px 31px 22px 28px;
    font-size: 44px;
    line-height: 60px;
}

.out .text {
    padding-right: 29px;
    font-size: 45px;
}

.text p {
    margin: 0;
}

.text p + p {
    margin-top: 61px;
}

.meta {
    float: right;
    display: flex;
    align-items: center;
    gap: 8px;
    margin: 30px 0 -6px 36px;
    font-size: 32px;
    line-height: 36px;
    color: #8c8c90;
}

.out .meta {
    color: #7f9279;
}

.ticks {
    width: 42px;
    height: 28px;
    fill: none;
    stroke: #9db894;
    stroke-width: 4;
    stroke-linecap: round;
    stroke-linejoin: round;
}

.emoji {
    display: inline-block;
    width: 56px;
    height: 58px;
    margin: -6px 3px;
    vertical-align: -8px;
}

.quick-reply {
    display: flex;
    justify-content: center;
    align-items: center;
    gap: 24px;
    width: 100%;
    height: 121px;
    border-top: 2px solid #d6d6d8;
    color: #0a78b4;
    font-size: 39px;
}

.reply-icon {
    width: 54px;
    height: 46px;
    fill: none;
    stroke: #0a78b4;
    stroke-width: 3;
    stroke-linejoin: round;
}

/* Footer */
.footer {
    display: flex;
    flex-direction: column;
    align-items: center;
    gap: 77px;
    padding: 18px 0 22px;
    border-top: 2px solid #c4c4c4;
    border-radius: 0 0 12px 12px;
    background: #f5f5f5;
}

.composer {
    display: flex;
    align-items: center;
    width: 100%;
    padding: 0 46px 0 36px;
}

.field {
    flex: 1;
    min-width: 0;
    display: flex;
    align-items: center;
    height: 83px;
    margin: 0 50px 0 37px;
    padding: 0 29px 0 40px;
    border: 2px solid #d0d0d0;
    border-radius: 42px;
    background: #fff;
}

.field input {
    flex: 1;
    min-width: 0;
    border: none;
    outline: none;
    background: none;
    font-family: inherit;
    font-size: 44px;
}

.line-icon {
    fill: none;
    stroke: #0a78b4;
    stroke-width: 4;
    stroke-linecap: round;
    stroke-linejoin: round;
}

.line-icon .dot {
    fill: #0a78b4;
    stroke: none;
}

.plus {
    width: 56px;
    height: 56px;
    stroke-width: 5;
}

.sticker {
    width: 56px;
    height: 56px;
}

.camera {
    width: 64px;
    height: 52px;
    margin-right: 53px;
}

.mic {
    width: 44px;
    height: 64px;
}

.home-bar {
    width: 424px;
    height: 14px;
    border-radius: 7px;
    background: #000;
}
```
